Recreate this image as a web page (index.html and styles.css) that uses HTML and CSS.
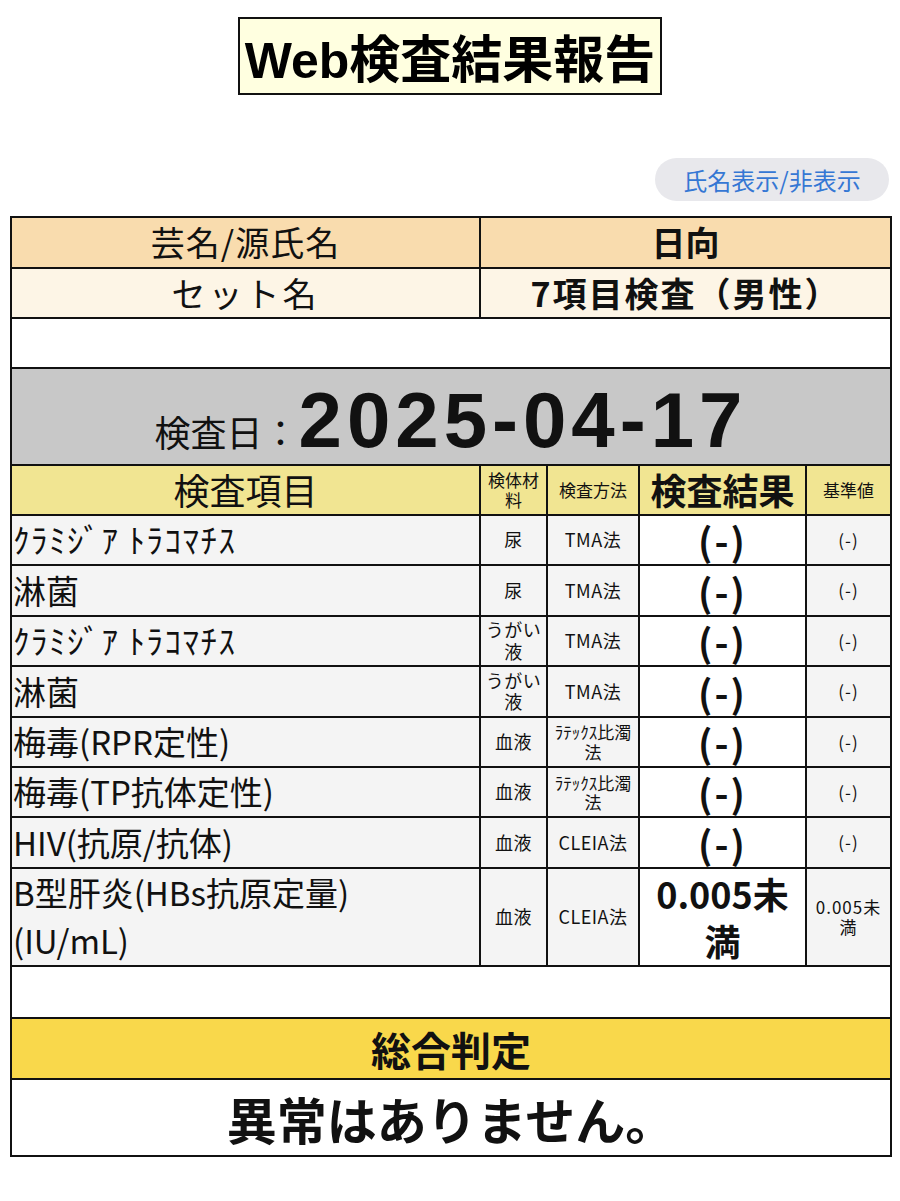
FILE: index.html
```html
<!DOCTYPE html>
<html lang="ja">
<head>
<meta charset="utf-8">
<title>Web検査結果報告</title>
<link rel="stylesheet" href="styles.css">
</head>
<body>
<header class="title-wrap">
  <h1 class="title"><span class="title-latin">Web</span>検査結果報告</h1>
</header>
<div class="toggle-row">
  <button class="toggle-btn" type="button">氏名表示/非表示</button>
</div>
<table class="report">
  <colgroup>
    <col class="c1"><col class="c2"><col class="c3"><col class="c4"><col class="c5">
  </colgroup>
  <tbody>
    <tr class="r-name">
      <td class="lbl">芸名/源氏名</td>
      <td colspan="4" class="val">日向</td>
    </tr>
    <tr class="r-set">
      <td class="lbl">セット名</td>
      <td colspan="4" class="val">7項目検査（男性）</td>
    </tr>
    <tr class="r-blank"><td colspan="5"></td></tr>
    <tr class="r-date">
      <td colspan="5"><span class="date-lbl">検査日：</span><span class="date-val">2025-04-17</span></td>
    </tr>
    <tr class="r-head">
      <th class="h-item">検査項目</th>
      <th class="h-small">検体材料</th>
      <th class="h-small">検査方法</th>
      <th class="h-result">検査結果</th>
      <th class="h-small">基準値</th>
    </tr>
    <tr class="r-data">
      <td class="d-item d-kana">ｸﾗﾐｼﾞｱ ﾄﾗｺﾏﾁｽ</td><td class="d-sm">尿</td><td class="d-sm">TMA法</td><td class="d-res">(-)</td><td class="d-ref">(-)</td>
    </tr>
    <tr class="r-data">
      <td class="d-item">淋菌</td><td class="d-sm">尿</td><td class="d-sm">TMA法</td><td class="d-res">(-)</td><td class="d-ref">(-)</td>
    </tr>
    <tr class="r-data">
      <td class="d-item d-kana">ｸﾗﾐｼﾞｱ ﾄﾗｺﾏﾁｽ</td><td class="d-sm">うがい液</td><td class="d-sm">TMA法</td><td class="d-res">(-)</td><td class="d-ref">(-)</td>
    </tr>
    <tr class="r-data">
      <td class="d-item">淋菌</td><td class="d-sm">うがい液</td><td class="d-sm">TMA法</td><td class="d-res">(-)</td><td class="d-ref">(-)</td>
    </tr>
    <tr class="r-data">
      <td class="d-item">梅毒(RPR定性)</td><td class="d-sm">血液</td><td class="d-sm d-narrow">ﾗﾃｯｸｽ比濁法</td><td class="d-res">(-)</td><td class="d-ref">(-)</td>
    </tr>
    <tr class="r-data">
      <td class="d-item">梅毒(TP抗体定性)</td><td class="d-sm">血液</td><td class="d-sm d-narrow">ﾗﾃｯｸｽ比濁法</td><td class="d-res">(-)</td><td class="d-ref">(-)</td>
    </tr>
    <tr class="r-data">
      <td class="d-item">HIV(抗原/抗体)</td><td class="d-sm">血液</td><td class="d-sm">CLEIA法</td><td class="d-res">(-)</td><td class="d-ref">(-)</td>
    </tr>
    <tr class="r-data r-tall">
      <td class="d-item">B型肝炎(HBs抗原定量)<br>(IU/mL)</td><td class="d-sm">血液</td><td class="d-sm">CLEIA法</td><td class="d-res d-num">0.005未満</td><td class="d-ref">0.005未満</td>
    </tr>
    <tr class="r-blank2"><td colspan="5"></td></tr>
    <tr class="r-judge-h"><td colspan="5">総合判定</td></tr>
    <tr class="r-judge"><td colspan="5">異常はありません。</td></tr>
  </tbody>
</table>
</body>
</html>
```
FILE: styles.css
```css
html, body {
  margin: 0;
  padding: 0;
  background: #ffffff;
}
body {
  font-family: "Noto Sans CJK JP", "Noto Sans", sans-serif;
  color: #111;
  padding: 17px 10px 0 10px;
}
.title-wrap {
  display: flex;
  justify-content: center;
}
.title {
  margin: 0;
  display: inline-block;
  background: #ffffe0;
  border: 2px solid #111;
  font-size: 51px;
  font-weight: 700;
  line-height: 74px;
  height: 74px;
  padding: 0 5px 0 5px;
  color: #000;
}
.title-latin {
  font-family: "Liberation Sans", Arial, sans-serif;
  font-size: 50px;
}
.toggle-row {
  display: flex;
  justify-content: flex-end;
  margin-top: 63px;
  margin-bottom: 15px;
}
.toggle-btn {
  width: 234px;
  height: 43px;
  border: none;
  border-radius: 22px;
  background: #e8e8ec;
  color: #3577d4;
  font-family: "Noto Sans CJK JP", sans-serif;
  font-size: 24px;
  padding: 0;
  margin-right: 1px;
}
.report {
  width: 880px;
  border-collapse: collapse;
  table-layout: fixed;
}
.c1 { width: 469px; }
.c2 { width: 67px; }
.c3 { width: 92px; }
.c4 { width: 167px; }
.c5 { width: 85px; }
.report td, .report th {
  border: 2px solid #111;
  padding: 0;
  text-align: center;
  vertical-align: middle;
  line-height: 1.2;
}
.r-name td {
  background: #f9dcae;
  height: 49px;
  font-size: 34px;
}
.r-set td {
  background: #fdf5e6;
  height: 48px;
  font-size: 34px;
}
.r-name .lbl {
  letter-spacing: 1px;
}
.r-name .val, .r-set .val {
  font-weight: 700;
}
.r-set .val {
  letter-spacing: 2px;
}
.r-set .lbl {
  letter-spacing: 3px;
}
.r-blank td {
  height: 48px;
  background: #fff;
}
.r-date td {
  background: #c8c8c8;
  height: 89px;
  padding-top: 6px;
}
.date-lbl {
  font-size: 36px;
}
.date-val {
  font-family: "Liberation Sans", Arial, sans-serif;
  font-weight: 700;
  font-size: 78px;
  letter-spacing: 5px;
  line-height: 1;
}
.r-head th {
  background: #f1e592;
  height: 48px;
  font-weight: 400;
}
.h-item { font-size: 36px; }
.h-result { font-size: 36px; font-weight: 700 !important; }
.h-small { font-size: 17px; padding: 0 3px !important; }
.r-data td {
  background: #f4f4f4;
  height: 48.4px;
}
.r-data.r-tall td { height: 96.5px; }
.d-item {
  text-align: left !important;
  font-size: 33px;
  padding-left: 1px !important;
  line-height: 1.2 !important;
}
.r-tall .d-item {
  line-height: 1.45 !important;
}
.d-kana {
  letter-spacing: 1.5px;
}
.d-sm {
  font-size: 18px;
  padding: 0 3px !important;
  letter-spacing: 0.5px;
}
.d-narrow {
  font-size: 17px;
  letter-spacing: 0;
  line-height: 1.15 !important;
}
.d-res {
  background: #fff !important;
  font-size: 38px;
  font-weight: 700;
  letter-spacing: 2px;
  line-height: 1.15 !important;
}
.d-num {
  font-size: 36px;
  letter-spacing: 0;
  padding: 0 6px !important;
  line-height: 1.3 !important;
}
.d-ref {
  font-size: 17px;
  padding: 0 4px !important;
  letter-spacing: 1px;
}
.r-blank2 td {
  height: 50px;
  background: #fff;
}
.r-judge-h td {
  background: #f9d84b;
  height: 59px;
  font-size: 40px;
  font-weight: 700;
}
.r-judge td {
  background: #fff;
  height: 75px;
  font-size: 50px;
  font-weight: 700;
}
```
